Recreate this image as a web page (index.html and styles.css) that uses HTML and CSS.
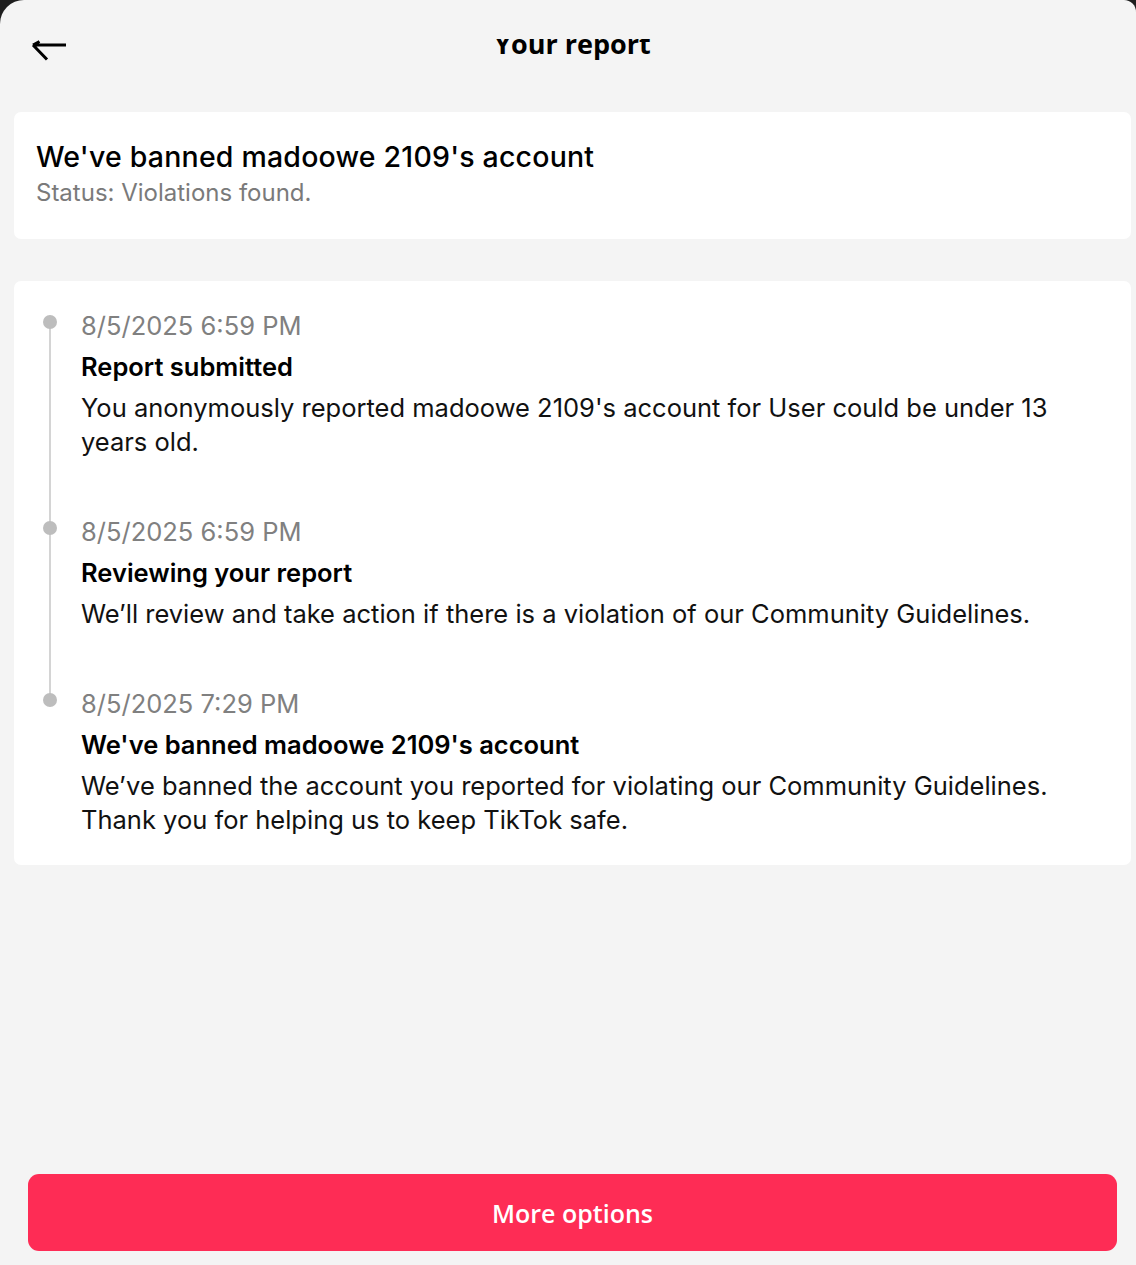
FILE: index.html
```html
<!DOCTYPE html>
<html lang="en">
<head>
<meta charset="utf-8">
<title>Your report</title>
<link rel="stylesheet" href="styles.css">
</head>
<body>
<div class="sheet">
  <header class="header">
    <div class="back">
      <svg width="40" height="26" viewBox="0 0 40 26" aria-hidden="true">
        <path d="M35 6 H2 M2 6 L8.5 2.5 M2 6 L16 20.5" fill="none" stroke="#000" stroke-width="3" stroke-linecap="butt" stroke-linejoin="miter"/>
      </svg>
    </div>
    <div class="title-clip"><h1 class="title">Your report</h1></div>
    <div class="spacer"></div>
  </header>

  <section class="card summary">
    <h2 class="summary-title">We've banned madoowe 2109's account</h2>
    <p class="summary-status">Status: Violations found.</p>
  </section>

  <section class="card timeline">
    <div class="item">
      <div class="date">8/5/2025 6:59 PM</div>
      <div class="item-title">Report submitted</div>
      <div class="item-body">You anonymously reported madoowe 2109's account for User could be under 13 years old.</div>
    </div>
    <div class="item">
      <div class="date">8/5/2025 6:59 PM</div>
      <div class="item-title">Reviewing your report</div>
      <div class="item-body">We’ll review and take action if there is a violation of our Community Guidelines.</div>
    </div>
    <div class="item last">
      <div class="date">8/5/2025 7:29 PM</div>
      <div class="item-title">We've banned madoowe 2109's account</div>
      <div class="item-body">We’ve banned the account you reported for violating our Community Guidelines. Thank you for helping us to keep TikTok safe.</div>
    </div>
  </section>

  <div class="footer">
    <button class="btn">More options</button>
  </div>
</div>
</body>
</html>
```

FILE: styles.css
```css
* { box-sizing: border-box; }
html, body { margin: 0; padding: 0; }
body {
  background: #1e1e1e;
  font-family: Inter, "Open Sans", "Liberation Sans", sans-serif;
  color: #000;
}
.sheet {
  min-height: 1265px;
  background: #f4f4f4;
  border-top-left-radius: 24px;
  border-top-right-radius: 12px;
  display: flex;
  flex-direction: column;
  padding: 0 5px 14px 14px;
}
.header {
  height: 112px;
  display: grid;
  grid-template-columns: 1fr auto 1fr;
  align-items: start;
  padding-top: 39px;
}
.back {
  padding-left: 17px;
  line-height: 0;
}
.back svg { display: block; }
.title-clip {
  height: 24px;
  overflow: hidden;
}
.title {
  margin: -9px 0 0 0;
  font-family: "Open Sans", Roboto, sans-serif;
  font-weight: 700;
  font-size: 27px;
  line-height: 28px;
  white-space: nowrap;
}
.card {
  background: #fff;
  border-radius: 7px;
}
.summary {
  padding: 27px 22px 30px;
}
.summary-title {
  margin: 0;
  font-family: Inter, "Open Sans", sans-serif;
  font-size: 28.5px;
  font-weight: 500;
  letter-spacing: 0.2px;
  line-height: 36px;
}
.summary-status {
  margin: 2px 0 0 0;
  font-family: Inter, "Open Sans", sans-serif;
  font-size: 24px;
  line-height: 32px;
  color: #7a7a7a;
}
.timeline {
  margin-top: 42px;
  padding: 28px 60px 28px 67px;
  font-family: Inter, "Noto Sans", sans-serif;
  display: flex;
  flex-direction: column;
  gap: 56px;
}
.item {
  position: relative;
}
.item::before {
  content: "";
  position: absolute;
  left: -32px;
  top: 13px;
  width: 2px;
  height: calc(100% + 56px);
  background: #d4d4d4;
}
.item.last::before { display: none; }
.item::after {
  content: "";
  position: absolute;
  left: -38px;
  top: 6px;
  width: 14px;
  height: 14px;
  border-radius: 50%;
  background: #bdbdbd;
}
.date {
  font-size: 25.5px;
  line-height: 34px;
  color: #808080;
}
.item-title {
  margin-top: 7px;
  font-size: 25.5px;
  line-height: 34px;
  font-weight: 600;
}
.item-body {
  margin-top: 7px;
  font-size: 25.5px;
  line-height: 34px;
  color: #111;
}
.footer {
  margin-top: auto;
  padding: 0 14px 0 14px;
}
.btn {
  display: block;
  width: 100%;
  height: 77px;
  border: 0;
  border-radius: 11px;
  background: #fe2c55;
  color: #fff;
  font-family: "Open Sans", Roboto, sans-serif;
  font-weight: 600;
  font-size: 25px;
}
```
